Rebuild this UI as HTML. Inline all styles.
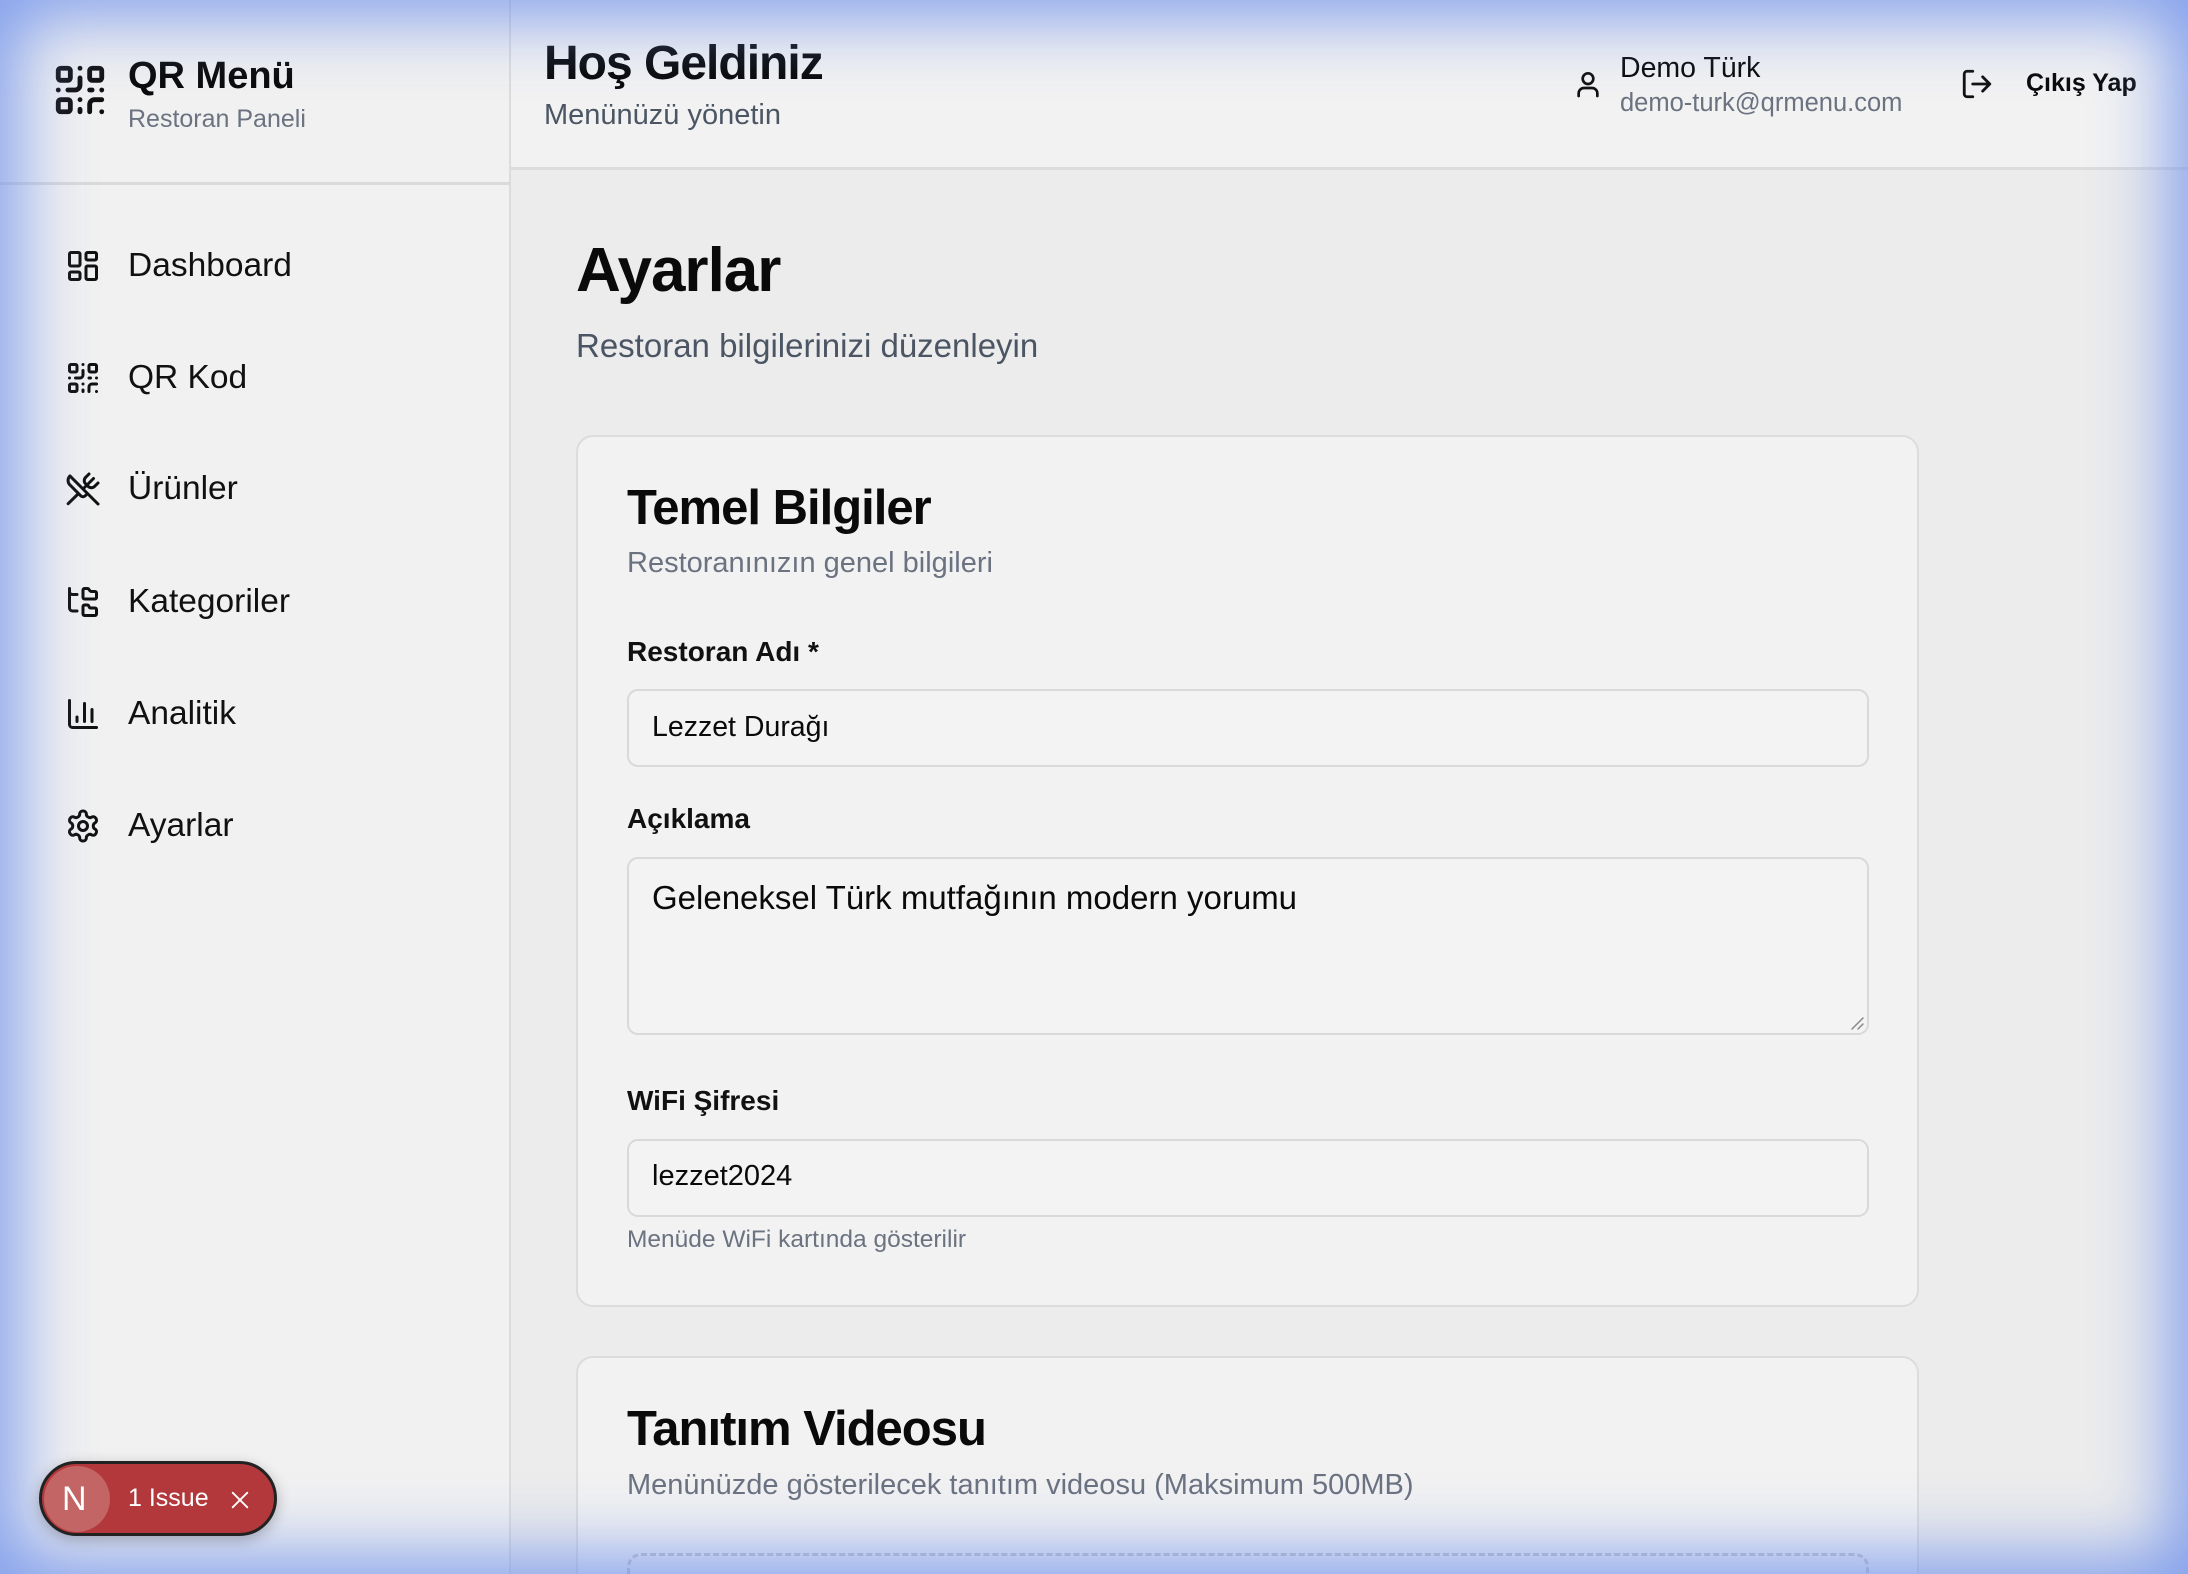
<!DOCTYPE html>
<html><head><meta charset="utf-8">
<style>
*{margin:0;padding:0;box-sizing:border-box}
html,body{width:2188px;height:1574px;overflow:hidden}
body{background:#ececec;font-family:"Liberation Sans",sans-serif;color:#0a0a0a;position:relative}
.a{position:absolute;white-space:nowrap}
.t{line-height:1}
svg{position:absolute;fill:none;stroke:#111;stroke-width:2;stroke-linecap:round;stroke-linejoin:round}
#side{position:absolute;left:0;top:0;width:511px;height:1574px;background:#f1f1f1;border-right:2px solid #dcdcdc}
#sideh{position:absolute;left:0;top:0;width:511px;height:185px;border-bottom:3px solid #dadada}
#head{position:absolute;left:511px;top:0;width:1677px;height:170px;background:#f2f2f2;border-bottom:3px solid #dcdcdc}
.nav{font-size:33.5px;color:#111;left:128px}
.card{position:absolute;left:576px;width:1343px;background:#f2f2f2;border:2px solid #dcdcdc;border-radius:17px}
.inp{position:absolute;left:627px;width:1242px;border:2px solid #d9d9d9;border-radius:11px;background:#f3f3f3}
.lbl{font-size:28px;font-weight:bold;left:627px;color:#111}
.glow{position:absolute;left:0;top:0;width:2188px;height:1574px;pointer-events:none;box-shadow:inset 0 0 70px 18px rgba(110,145,235,.85)}
</style></head><body>
<div id="side"><div id="sideh"></div></div>
<div id="head"></div>

<svg style="left:51px;top:61px" width="58" height="58" viewBox="0 0 24 24" stroke-width="2.4"><rect x="3" y="3" width="5" height="5" rx="1"/><rect x="16" y="3" width="5" height="5" rx="1"/><rect x="3" y="16" width="5" height="5" rx="1"/><path d="M21 16h-3a2 2 0 0 0-2 2v3M21 21v.01M12 7v3a2 2 0 0 1-2 2H7M3 12h.01M12 3h.01M12 16v.01M16 12h1M21 12v.01M12 21v-1"/></svg>
<div class="a t" style="left:128px;top:57px;font-size:38px;font-weight:bold">QR Menü</div>
<div class="a t" style="left:128px;top:107px;font-size:25px;color:#6b7280">Restoran Paneli</div>

<svg style="left:65px;top:248px" width="36" height="36" viewBox="0 0 24 24"><rect x="3" y="3" width="7" height="9" rx="1"/><rect x="14" y="3" width="7" height="5" rx="1"/><rect x="14" y="12" width="7" height="9" rx="1"/><rect x="3" y="16" width="7" height="5" rx="1"/></svg>
<div class="a t nav" style="top:249px">Dashboard</div>
<svg style="left:65px;top:360px" width="36" height="36" viewBox="0 0 24 24"><rect x="3" y="3" width="5" height="5" rx="1"/><rect x="16" y="3" width="5" height="5" rx="1"/><rect x="3" y="16" width="5" height="5" rx="1"/><path d="M21 16h-3a2 2 0 0 0-2 2v3M21 21v.01M12 7v3a2 2 0 0 1-2 2H7M3 12h.01M12 3h.01M12 16v.01M16 12h1M21 12v.01M12 21v-1"/></svg>
<div class="a t nav" style="top:361px">QR Kod</div>
<svg style="left:65px;top:471px" width="36" height="36" viewBox="0 0 24 24"><path d="m16 2-2.3 2.3a3 3 0 0 0 0 4.2l1.8 1.8a3 3 0 0 0 4.2 0L22 8M15 15 3.3 3.3a4.2 4.2 0 0 0 0 6l7.3 7.3c.7.7 2 .7 2.8 0L15 15Zm0 0 7 7M2.1 21.8l6.4-6.3M19 5l-7 7"/></svg>
<div class="a t nav" style="top:472px">Ürünler</div>
<svg style="left:65px;top:584px" width="36" height="36" viewBox="0 0 24 24"><path d="M20 10a1 1 0 0 0 1-1V6a1 1 0 0 0-1-1h-2.5a1 1 0 0 1-.8-.4l-.9-1.2A1 1 0 0 0 15 3h-2a1 1 0 0 0-1 1v5a1 1 0 0 0 1 1ZM20 21a1 1 0 0 0 1-1v-3a1 1 0 0 0-1-1h-2.9a1 1 0 0 1-.88-.55l-.42-.85a1 1 0 0 0-.92-.6H13a1 1 0 0 0-1 1v5a1 1 0 0 0 1 1ZM3 5a2 2 0 0 0 2 2h3M3 3v13a2 2 0 0 0 2 2h3"/></svg>
<div class="a t nav" style="top:585px">Kategoriler</div>
<svg style="left:65px;top:696px" width="36" height="36" viewBox="0 0 24 24"><path d="M3 3v16a2 2 0 0 0 2 2h16M18 17V9M13 17V5M8 17v-3"/></svg>
<div class="a t nav" style="top:697px">Analitik</div>
<svg style="left:65px;top:808px" width="36" height="36" viewBox="0 0 24 24"><path d="M12.22 2h-.44a2 2 0 0 0-2 2v.18a2 2 0 0 1-1 1.73l-.43.25a2 2 0 0 1-2 0l-.15-.08a2 2 0 0 0-2.73.73l-.22.38a2 2 0 0 0 .73 2.73l.15.1a2 2 0 0 1 1 1.72v.51a2 2 0 0 1-1 1.74l-.15.09a2 2 0 0 0-.73 2.73l.22.38a2 2 0 0 0 2.73.73l.15-.08a2 2 0 0 1 2 0l.43.25a2 2 0 0 1 1 1.73V20a2 2 0 0 0 2 2h.44a2 2 0 0 0 2-2v-.18a2 2 0 0 1 1-1.73l.43-.25a2 2 0 0 1 2 0l.15.08a2 2 0 0 0 2.73-.73l.22-.39a2 2 0 0 0-.73-2.73l-.15-.08a2 2 0 0 1-1-1.74v-.5a2 2 0 0 1 1-1.74l.15-.09a2 2 0 0 0 .73-2.73l-.22-.38a2 2 0 0 0-2.73-.73l-.15.08a2 2 0 0 1-2 0l-.43-.25a2 2 0 0 1-1-1.73V4a2 2 0 0 0-2-2z"/><circle cx="12" cy="12" r="3"/></svg>
<div class="a t nav" style="top:809px">Ayarlar</div>

<div class="a t" style="left:544px;top:40px;font-size:48px;font-weight:bold;letter-spacing:-1px">Hoş Geldiniz</div>
<div class="a t" style="left:544px;top:101px;font-size:29px;color:#4b5563">Menünüzü yönetin</div>
<svg style="left:1572px;top:68px" width="32" height="32" viewBox="0 0 24 24"><circle cx="12" cy="8" r="4"/><path d="M19 21v-2a4 4 0 0 0-4-4H9a4 4 0 0 0-4 4v2"/></svg>
<div class="a t" style="left:1620px;top:54px;font-size:28.5px">Demo Türk</div>
<div class="a t" style="left:1620px;top:91px;font-size:25.5px;color:#6b7280">demo-turk@qrmenu.com</div>
<svg style="left:1960px;top:67px" width="34" height="34" viewBox="0 0 24 24"><path d="M9 21H5a2 2 0 0 1-2-2V5a2 2 0 0 1 2-2h4M16 17l5-5-5-5M21 12H9"/></svg>
<div class="a t" style="left:2026px;top:71px;font-size:25px;font-weight:bold">Çıkış Yap</div>

<div class="a t" style="left:576px;top:240px;font-size:62px;font-weight:bold;letter-spacing:-1px">Ayarlar</div>
<div class="a t" style="left:576px;top:329px;font-size:33px;color:#4b5563">Restoran bilgilerinizi düzenleyin</div>

<div class="card" style="top:435px;height:872px"></div>
<div class="a t" style="left:627px;top:484px;font-size:49px;font-weight:bold;letter-spacing:-1px">Temel Bilgiler</div>
<div class="a t" style="left:627px;top:549px;font-size:29px;color:#6b7280">Restoranınızın genel bilgileri</div>
<div class="a t lbl" style="top:638px">Restoran Adı *</div>
<div class="inp" style="top:689px;height:78px"></div>
<div class="a t" style="left:652px;top:713px;font-size:28.5px">Lezzet Durağı</div>
<div class="a t lbl" style="top:805px">Açıklama</div>
<div class="inp" style="top:857px;height:178px"></div>
<div class="a t" style="left:652px;top:881px;font-size:33px">Geleneksel Türk mutfağının modern yorumu</div>
<svg style="left:1850px;top:1016px;stroke:#888;stroke-width:1.5" width="14" height="14" viewBox="0 0 14 14"><path d="M2 13 13 2M8 13l5-5"/></svg>
<div class="a t lbl" style="top:1087px">WiFi Şifresi</div>
<div class="inp" style="top:1139px;height:78px"></div>
<div class="a t" style="left:652px;top:1162px;font-size:29px">lezzet2024</div>
<div class="a t" style="left:627px;top:1228px;font-size:24.5px;color:#6b7280">Menüde WiFi kartında gösterilir</div>

<div class="card" style="top:1356px;height:260px"></div>
<div class="a t" style="left:627px;top:1405px;font-size:49px;font-weight:bold;letter-spacing:-1px">Tanıtım Videosu</div>
<div class="a t" style="left:627px;top:1471px;font-size:29px;color:#6b7280">Menünüzde gösterilecek tanıtım videosu (Maksimum 500MB)</div>
<div class="a" style="left:627px;top:1553px;width:1242px;height:80px;border:3px dashed #c8c8c8;border-radius:14px"></div>

<div class="glow"></div>

<div class="a" style="left:39px;top:1461px;width:238px;height:75px;border-radius:38px;background:#b3383b;border:3px solid #222;box-shadow:0 4px 14px rgba(0,0,0,.25)"></div>
<div class="a" style="left:44px;top:1466px;width:66px;height:66px;border-radius:50%;background:#c36465"></div>
<div class="a t" style="left:62px;top:1482px;font-size:34px;color:#fff">N</div>
<div class="a t" style="left:128px;top:1486px;font-size:25px;color:#fff">1 Issue</div>
<svg style="left:229px;top:1489px;stroke:#fff" width="22" height="22" viewBox="0 0 24 24"><path d="M4 4l16 16M20 4 4 20"/></svg>
</body></html>
